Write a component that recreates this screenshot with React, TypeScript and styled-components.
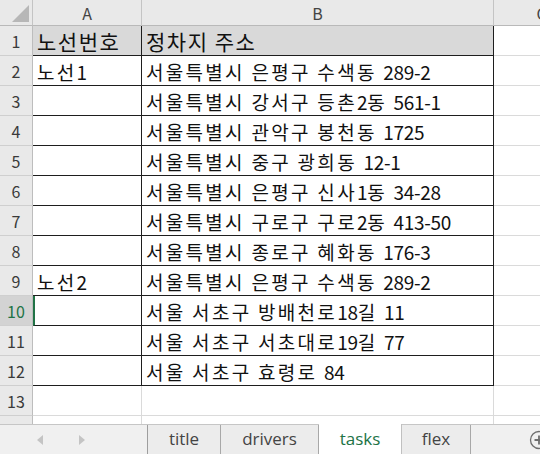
import React from 'react';
import styled, { createGlobalStyle } from 'styled-components';

const GlobalStyle = createGlobalStyle`
  html, body {
    margin: 0;
    padding: 0;
    background: #ffffff;
    overflow: hidden;
  }
  * {
    box-sizing: border-box;
  }
`;

type RowData = { n: number; a: string; b: string; head?: boolean; table: boolean };

const rows: RowData[] = [
  { n: 1, a: '노선번호', b: '정차지 주소', head: true, table: true },
  { n: 2, a: '노선1', b: '서울특별시 은평구 수색동 289-2', table: true },
  { n: 3, a: '', b: '서울특별시 강서구 등촌2동 561-1', table: true },
  { n: 4, a: '', b: '서울특별시 관악구 봉천동 1725', table: true },
  { n: 5, a: '', b: '서울특별시 중구 광희동 12-1', table: true },
  { n: 6, a: '', b: '서울특별시 은평구 신사1동 34-28', table: true },
  { n: 7, a: '', b: '서울특별시 구로구 구로2동 413-50', table: true },
  { n: 8, a: '', b: '서울특별시 종로구 혜화동 176-3', table: true },
  { n: 9, a: '노선2', b: '서울특별시 은평구 수색동 289-2', table: true },
  { n: 10, a: '', b: '서울 서초구 방배천로18길 11', table: true },
  { n: 11, a: '', b: '서울 서초구 서초대로19길 77', table: true },
  { n: 12, a: '', b: '서울 서초구 효령로 84', table: true },
  { n: 13, a: '', b: '', table: false },
];

const SELECTED_ROW = 10;
const tabs = ['title', 'drivers', 'tasks', 'flex'];
const ACTIVE_TAB = 'tasks';

// hangul in the sheet font runs wider than digits, so digits get their own span
const CellText = ({ text }: { text: string }) => (
  <>
    {text.split(/(\d[\d-]*)/).map((part, i) =>
      /^\d/.test(part) ? <Num key={i}>{part}</Num> : <span key={i}>{part}</span>
    )}
  </>
);

const App = () => {
  return (
    <>
      <GlobalStyle />
      <Window>
        <Sheet>
          <Corner>
            <CornerMark />
          </Corner>
          <ColHeader>A</ColHeader>
          <ColHeader>B</ColHeader>
          <ColHeader>C</ColHeader>

          {rows.map((row) => (
            <React.Fragment key={row.n}>
              <RowHeader $selected={row.n === SELECTED_ROW}>{row.n}</RowHeader>
              <Cell $table={row.table} $head={row.head} $selected={row.n === SELECTED_ROW}>
                <CellText text={row.a} />
              </Cell>
              <Cell $table={row.table} $head={row.head}>
                <CellText text={row.b} />
              </Cell>
              <Cell />
            </React.Fragment>
          ))}

          <PartialHeader />
          <PartialCell />
          <PartialCell />
          <PartialCell />
        </Sheet>

        <TabBar>
          <Nav>
            <Arrow viewBox="0 0 6 10">
              <path d="M6 0 L0 5 L6 10 Z" />
            </Arrow>
            <Arrow viewBox="0 0 6 10">
              <path d="M0 0 L6 5 L0 10 Z" />
            </Arrow>
          </Nav>
          <Tabs>
            {tabs.map((t) => (
              <Tab key={t} $active={t === ACTIVE_TAB} $name={t}>
                {t}
              </Tab>
            ))}
          </Tabs>
          <AddArea>
            <svg width="20" height="20" viewBox="0 0 20 20">
              <circle cx="10" cy="10" r="8.5" fill="none" stroke="#6e6e6e" strokeWidth="1.3" />
              <path d="M10 5.5 V14.5 M5.5 10 H14.5" stroke="#6e6e6e" strokeWidth="1.8" />
            </svg>
          </AddArea>
        </TabBar>
      </Window>
    </>
  );
};

const Window = styled.div`
  width: 540px;
  height: 454px;
  overflow: hidden;
  display: flex;
  flex-direction: column;
  background: #ffffff;
`;

const Sheet = styled.div`
  display: grid;
  grid-template-columns: 33px 109px 352px 96px;
  grid-template-rows: 26px repeat(13, 30px) 8px;
  width: 590px;
  font-family: 'Noto Sans CJK KR', 'Noto Sans', sans-serif;
`;

const Corner = styled.div`
  position: relative;
  background: #e9e9e9;
  border-right: 1px solid #c4c4c4;
  border-bottom: 1px solid #b9b9b9;
`;

const CornerMark = styled.div`
  position: absolute;
  right: 3px;
  bottom: 3px;
  width: 0;
  height: 0;
  border-left: 17px solid transparent;
  border-bottom: 17px solid #b7b7b7;
`;

const ColHeader = styled.div`
  background: #e9e9e9;
  border-right: 1px solid #c4c4c4;
  border-bottom: 1px solid #b9b9b9;
  display: flex;
  align-items: center;
  justify-content: center;
  font-size: 16px;
  color: #444444;
  padding-top: 1px;
`;

const RowHeader = styled.div<{ $selected?: boolean }>`
  background: ${(p) => (p.$selected ? '#d3d3d3' : '#e9e9e9')};
  color: ${(p) => (p.$selected ? '#217346' : '#3a3a3a')};
  border-right: 1px solid #bdbdbd;
  border-bottom: 1px solid #cfcfcf;
  display: flex;
  align-items: center;
  justify-content: center;
  font-size: 16px;
  padding-top: 1px;
`;

const Cell = styled.div<{ $table?: boolean; $head?: boolean; $selected?: boolean }>`
  background: ${(p) => (p.$head ? '#d9d9d9' : '#ffffff')};
  border-right: 1px solid ${(p) => (p.$table ? '#1e1e1e' : '#dadada')};
  border-bottom: 1px solid ${(p) => (p.$table ? '#1e1e1e' : '#dadada')};
  border-left: ${(p) => (p.$selected ? '2px solid #217346' : 'none')};
  display: flex;
  align-items: center;
  padding: 1px 0 0 ${(p) => (p.$selected ? '2px' : '4px')};
  font-size: ${(p) => (p.$head ? '21px' : '19px')};
  letter-spacing: ${(p) => (p.$head ? '1.5px' : '2.3px')};
  color: #111111;
  white-space: pre;
  overflow: hidden;
`;

const Num = styled.span`
  letter-spacing: -0.3px;
`;

const PartialHeader = styled.div`
  background: #e9e9e9;
  border-right: 1px solid #bdbdbd;
`;

const PartialCell = styled.div`
  border-right: 1px solid #dadada;
`;

const TabBar = styled.div`
  flex: 1;
  display: flex;
  align-items: stretch;
  background: #f0f0f0;
  border-top: 1px solid #c6c6c6;
  font-family: 'Open Sans', 'Noto Sans', sans-serif;
`;

const Nav = styled.div`
  width: 147px;
  display: flex;
  align-items: center;
  gap: 36px;
  padding-left: 37px;
`;

const Arrow = styled.svg`
  width: 6px;
  height: 10px;
  fill: #c4c4c4;
`;

const Tabs = styled.div`
  display: flex;
  border-left: 1px solid #9e9e9e;
`;

const tabWidths: Record<string, number> = { title: 73, drivers: 98, tasks: 83, flex: 69 };

const Tab = styled.div<{ $active?: boolean; $name: string }>`
  width: ${(p) => tabWidths[p.$name]}px;
  display: flex;
  align-items: center;
  justify-content: center;
  font-size: 17px;
  padding-bottom: 2px;
  color: ${(p) => (p.$active ? '#217346' : '#444444')};
  background: ${(p) => (p.$active ? '#ffffff' : '#ececec')};
  border-right: 1px solid ${(p) => (p.$active ? '#c0c0c0' : '#a8a8a8')};
  margin-top: ${(p) => (p.$active ? '-1px' : '0')};
`;

const AddArea = styled.div`
  flex: 1;
  display: flex;
  align-items: center;
  justify-content: flex-end;
  margin-right: -9px;
`;

export default App;
